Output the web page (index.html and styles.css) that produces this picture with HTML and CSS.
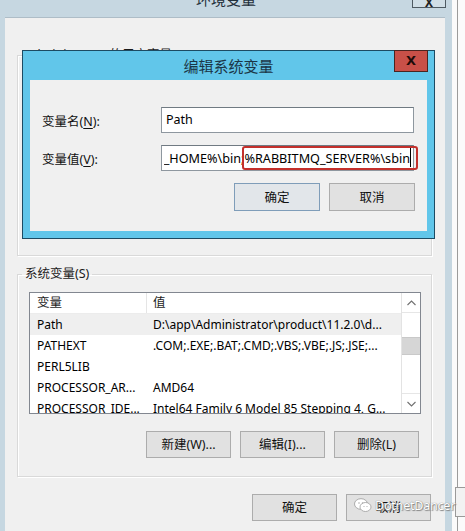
FILE: index.html
```html
<!DOCTYPE html>
<html lang="zh-CN">
<head>
<meta charset="utf-8">
<title>环境变量</title>
<link rel="stylesheet" href="styles.css">
</head>
<body>
<div class="screen">
  <div class="win">
    <div class="win-title">
      <span></span>
      <span class="win-title-text">环境变量</span>
      <span class="win-close">X</span>
    </div>
    <div class="client">
      <fieldset class="group group-user">
        <legend>Administrator 的用户变量(U)</legend>
      </fieldset>
      <fieldset class="group group-sys">
        <legend>系统变量(S)</legend>
        <div class="list">
          <div class="list-main">
            <div class="row head"><span class="c1">变量</span><span class="c2">值</span></div>
            <div class="row sel"><span class="c1">Path</span><span class="c2">D:\app\Administrator\product\11.2.0\d...</span></div>
            <div class="row"><span class="c1">PATHEXT</span><span class="c2">.COM;.EXE;.BAT;.CMD;.VBS;.VBE;.JS;.JSE;...</span></div>
            <div class="row"><span class="c1">PERL5LIB</span><span class="c2"></span></div>
            <div class="row"><span class="c1">PROCESSOR_AR...</span><span class="c2">AMD64</span></div>
            <div class="row"><span class="c1">PROCESSOR_IDE...</span><span class="c2">Intel64 Family 6 Model 85 Stepping 4, G...</span></div>
          </div>
          <div class="sb">
            <div class="sb-btn sb-up"><svg width="9" height="6" viewBox="0 0 9 6"><polyline points="0.5,5 4.5,1 8.5,5" fill="none" stroke="#707070" stroke-width="1.1"/></svg></div>
            <div class="sb-thumb"></div>
            <div class="sb-fill"></div>
            <div class="sb-btn sb-down"><svg width="9" height="6" viewBox="0 0 9 6"><polyline points="0.5,1 4.5,5 8.5,1" fill="none" stroke="#707070" stroke-width="1.1"/></svg></div>
          </div>
        </div>
        <div class="btn-row group-btns">
          <button class="btn">新建(W)...</button>
          <button class="btn">编辑(I)...</button>
          <button class="btn">删除(L)</button>
        </div>
      </fieldset>
      <div class="btn-row main-btns">
        <button class="btn">确定</button>
        <button class="btn">取消</button>
      </div>
    </div>
  </div>
  <div class="behind">
    <div class="behind-inner"><div class="behind-box"></div></div>
  </div>

  <div class="dlg">
    <div class="dlg-title">
      <span></span>
      <span class="dlg-title-text">编辑系统变量</span>
      <span class="dlg-close">X</span>
    </div>
    <div class="dlg-client">
      <div class="field">
        <label class="field-label">变量名(<u>N</u>):</label>
        <div class="input"><span>Path</span></div>
      </div>
      <div class="field">
        <label class="field-label">变量值(<u>V</u>):</label>
        <div class="input input-val"><div class="clip"><span>_HOME%\bin;%RABBITMQ_SERVER%\sbin</span></div><i class="caret"></i><b class="mark"></b></div>
      </div>
      <div class="btn-row dlg-btns">
        <button class="btn btn-default">确定</button>
        <button class="btn">取消</button>
      </div>
    </div>
  </div>

  <div class="wm">
    <svg class="wm-icon" width="18" height="15" viewBox="0 0 18 15">
      <ellipse cx="7" cy="6" rx="6.5" ry="5.3" fill="#fff" stroke="#9a9a9a" stroke-width="0.8"/>
      <ellipse cx="11.5" cy="9" rx="5.5" ry="4.5" fill="#fff" stroke="#9a9a9a" stroke-width="0.8"/>
      <circle cx="5" cy="5" r="0.8" fill="#aaa"/><circle cx="8.6" cy="5" r="0.8" fill="#aaa"/>
      <circle cx="10" cy="8.5" r="0.6" fill="#aaa"/><circle cx="13" cy="8.5" r="0.6" fill="#aaa"/>
    </svg>
    <span class="wm-text">DotnetDancer</span>
  </div>
</div>
</body>
</html>
```

FILE: styles.css
```css
* { box-sizing: border-box; }
html, body { margin: 0; padding: 0; }
body {
  width: 465px;
  height: 531px;
  overflow: hidden;
  font-family: "Noto Sans", "Noto Sans CJK SC", sans-serif;
  font-size: 12px;
  color: #000;
  background: #fafafa;
}
.screen {
  position: relative;
  width: 465px;
  height: 531px;
  display: flex;
}
.win {
  width: 452px;
  height: 531px;
  background: #c6d7e1;
  padding: 0 7px 0 5px;
  display: flex;
  flex-direction: column;
  flex: none;
}
.win-title {
  height: 17px;
  display: grid;
  grid-template-columns: 1fr auto 1fr;
  margin: 0 -7px 0 -5px;
}
.win-title-text {
  font-size: 15px;
  line-height: 20px;
  margin-top: -11px;
  color: #1f2f3a;
}
.win-close {
  justify-self: end;
  width: 34px;
  height: 8px;
  margin-right: 6px;
  border: 1px solid #4e5a62;
  border-top: none;
  background: #d0dee6;
  font-weight: bold;
  font-size: 12px;
  line-height: 6px;
  text-align: center;
  overflow: hidden;
  color: #222;
}
.client {
  flex: 1;
  background: #f0f0f0;
  border-top: 1px solid #aebdc7;
  padding: 0 13px 0 12px;
}
.group {
  margin: 0;
  border: 1px solid #d9d9d9;
  box-shadow: inset 1px 1px 0 #fff, 1px 1px 0 #fff;
  padding: 10px 10px 18px 11px;
}
.group legend {
  padding: 0 3px;
  margin-left: -7px;
  line-height: 16px;
  font-size: 12.5px;
  color: #1a1a1a;
}
.group-user {
  margin-top: 29px;
  height: 209px;
}
.group-sys {
  margin-top: 10px;
}
.list {
  width: 392px;
  height: 122px;
  border: 1px solid #828790;
  background: #fff;
  display: grid;
  grid-template-columns: 1fr 19px;
  overflow: hidden;
}
.list-main { overflow: hidden; }
.row {
  display: grid;
  grid-template-columns: 117px 1fr;
  height: 21px;
  line-height: 21px;
  white-space: nowrap;
}
.row span { overflow: hidden; }
.row .c1 { padding-left: 7px; }
.row .c2 { padding-left: 6px; }
.row.head { color: #1e1e1e; border-bottom: 1px solid #ececec; height: 21px; line-height: 20px; font-size: 12.5px; }
.row.head .c1 { border-right: 1px solid #e5e5e5; }
.row.sel { background: #efefef; }
.sb {
  border-left: 1px solid #e3e3e3;
  display: flex;
  flex-direction: column;
  background: #fff;
}
.sb-btn {
  height: 20px;
  display: flex;
  align-items: center;
  justify-content: center;
  flex: none;
}
.sb-up { border-bottom: 1px solid #e6e6e6; }
.sb-down { border-top: 1px solid #e6e6e6; }
.sb-thumb {
  margin-top: 24px;
  height: 18px;
  background: #d6d6d6;
  border-top: 1px solid #c9c9c9;
  border-bottom: 1px solid #c9c9c9;
  flex: none;
}
.sb-fill { flex: 1; }
.btn-row {
  display: flex;
  justify-content: flex-end;
  gap: 9px;
}
.btn {
  width: 85px;
  height: 27px;
  border: 1px solid #acacac;
  background: #e1e1e1;
  font-family: inherit;
  font-size: 12.5px;
  color: #111;
  padding: 0;
  line-height: 25px;
}
.group-btns { margin-top: 17px; padding-right: 2px; }
.main-btns { margin-top: 17px; padding-right: 1px; }
.behind {
  flex: 1;
  background: #fbfbfb;
  padding-left: 5px;
}
.behind-inner {
  height: 100%;
  border-left: 1px solid #9c9c9c;
  padding-top: 487px;
}
.behind-box {
  height: 30px;
  margin-left: -3px;
  border: 1px solid #9a9a9a;
  border-right: none;
  background: #f2f2f2;
}

/* dialog */
.dlg {
  position: absolute;
  left: 22px;
  top: 50px;
  width: 413px;
  height: 189px;
  border: 1px solid #1c4b63;
  background: #61c6ea;
  padding: 0 7px 7px 7px;
  display: flex;
  flex-direction: column;
}
.dlg-title {
  height: 29px;
  flex: none;
  display: grid;
  grid-template-columns: 1fr auto 1fr;
  align-items: center;
}
.dlg-title-text {
  font-size: 15px;
  line-height: 20px;
  color: #1b3546;
}
.dlg-close {
  justify-self: end;
  align-self: start;
  width: 34px;
  height: 22px;
  margin-top: -1px;
  margin-right: -1px;
  background: #c85048;
  border: 1px solid #4a2420;
  color: #1e0b08;
  font-weight: bold;
  font-size: 13px;
  line-height: 20px;
  text-align: center;
  font-family: "DejaVu Sans", sans-serif;
}
.dlg-client {
  flex: 1;
  background: #f0f0f0;
  padding: 27px 13px 0 12px;
  font-size: 12.5px;
}
.field {
  display: grid;
  grid-template-columns: 119px minmax(0, 1fr);
  align-items: center;
  margin-bottom: 12px;
}
.field-label { color: #111; }
.field-label u { text-decoration-thickness: 1px; text-underline-offset: 2px; }
.input {
  position: relative;
  min-width: 0;
  height: 26px;
  border: 1px solid #8e979f;
  border-top-color: #707a82;
  background: #fff;
  padding: 0 4px;
  line-height: 24px;
  white-space: nowrap;
  display: flex;
}
.input-val { padding-left: 2px; padding-right: 2px; font-size: 12.65px; }
.clip {
  flex: 1;
  min-width: 0;
  overflow: hidden;
  display: flex;
  justify-content: flex-end;
}
.clip span { flex: none; }
.caret {
  display: block;
  width: 1px;
  height: 19px;
  margin-top: 2px;
  background: #000;
  flex: none;
}
.mark {
  position: absolute;
  left: 80px;
  top: 0px;
  width: 176px;
  height: 24px;
  border: 2px solid #c3302c;
  border-radius: 3px;
}
.dlg-btns { margin-top: 5px; gap: 9px; margin-right: -1px; }
.dlg-btns .btn { width: 86px; height: 28px; }
.btn-default { border-color: #7f9db9; background: #e2e6ea; }

/* watermark */
.wm {
  position: absolute;
  left: 354px;
  top: 497px;
  display: flex;
  align-items: center;
  gap: 3px;
}
.wm-text {
  color: #fff;
  font-size: 12.5px;
  letter-spacing: -0.2px;
  text-shadow: 0 0 1px #666, 1px 1px 1px #888;
}
```
